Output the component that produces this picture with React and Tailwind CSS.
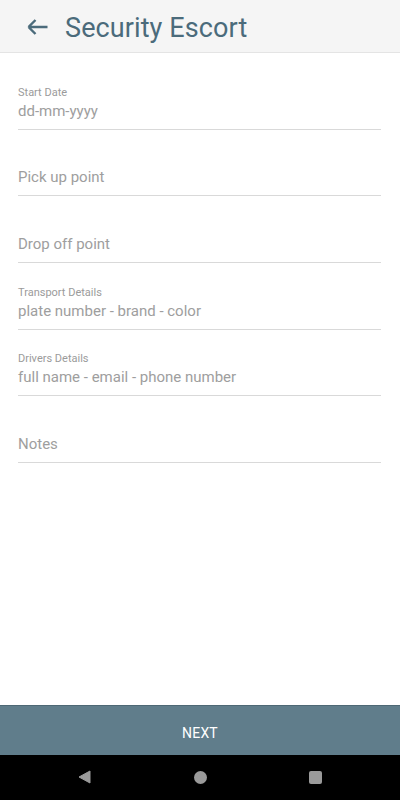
import React from "react";

function Field({ label, value }) {
  return (
    <div className="h-[66.67px] flex flex-col justify-end border-b border-[#d9d9d9] pb-[9px]">
      {label && (
        <div className="text-[11px] leading-[13px] text-[#9b9b9b] mb-[3px]">{label}</div>
      )}
      <div className="text-[15px] leading-[18px] text-[#9e9e9e]">{value}</div>
    </div>
  );
}

export default function App() {
  return (
    <div
      className="w-[400px] h-[800px] flex flex-col bg-white overflow-hidden"
      style={{ fontFamily: "Roboto, 'Noto Sans', sans-serif" }}
    >
      <div className="h-[53px] shrink-0 bg-[#f5f5f5] border-b border-[#e4e4e4] flex items-center">
        <svg width="24" height="24" viewBox="0 0 24 24" className="ml-[26px] mt-[2px]">
          <path
            d="M2.5 12H21.5M2.5 12L9.5 5M2.5 12L9.5 19"
            fill="none"
            stroke="#4b6b7b"
            strokeWidth="2.4"
            strokeLinecap="butt"
          />
        </svg>
        <div className="ml-[15px] mt-[3px] text-[27px] leading-[32px] text-[#4b6b7b] tracking-[0.1px]">
          Security Escort
        </div>
      </div>
      <div className="flex-1 px-[18px] pt-[10px] mr-[1px]">
        <Field label="Start Date" value="dd-mm-yyyy" />
        <Field value="Pick up point" />
        <Field value="Drop off point" />
        <Field label="Transport Details" value="plate number - brand - color" />
        <Field label="Drivers Details" value="full name - email - phone number" />
        <Field value="Notes" />
      </div>
      <div className="h-[50px] shrink-0 bg-[#607d8b] border-t border-[#4e6875] flex items-center justify-center pt-[5px]">
        <span className="text-[14px] text-white font-normal tracking-[0.2px]">NEXT</span>
      </div>
      <div className="h-[45px] shrink-0 bg-black flex items-center">
        <div className="w-[400px] flex items-center justify-between pl-[77px] pr-[78px] -mt-[1px]">
          <svg width="14" height="14" viewBox="0 0 14 14">
            <path d="M13 1V13L2 7Z" fill="#9a9a9a" strokeLinejoin="round" stroke="#9a9a9a" strokeWidth="1" />
          </svg>
          <div className="w-[13px] h-[13px] rounded-full bg-[#9a9a9a]" />
          <div className="w-[13px] h-[13px] rounded-[2px] bg-[#9a9a9a]" />
        </div>
      </div>
    </div>
  );
}
